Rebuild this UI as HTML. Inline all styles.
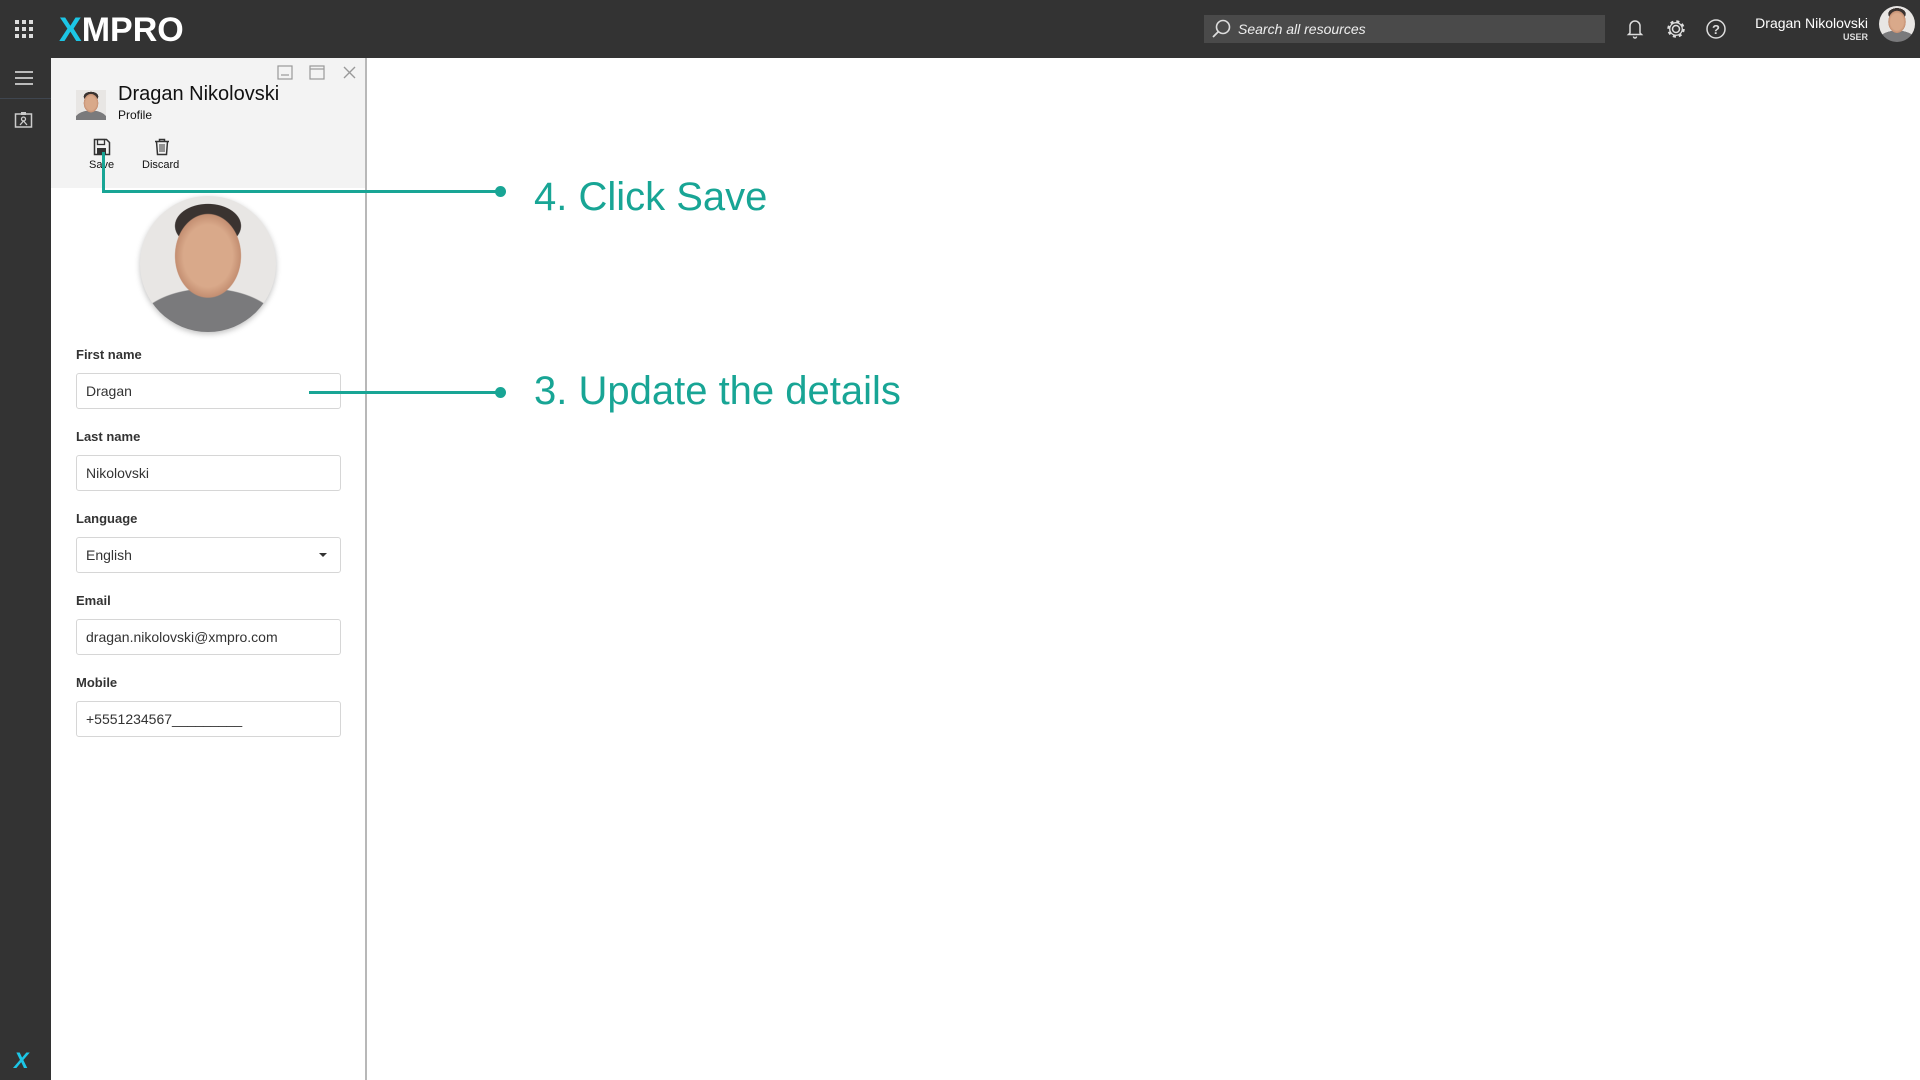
<!DOCTYPE html>
<html><head><meta charset="utf-8"><style>
*{box-sizing:border-box;margin:0;padding:0}
body{width:1920px;height:1080px;position:relative;background:#fff;font-family:"Liberation Sans",Arial,sans-serif;overflow:hidden}
.top{position:absolute;left:0;top:0;width:1920px;height:58px;background:#333}
.side{position:absolute;left:0;top:58px;width:51px;height:1022px;background:#333}
.panel{position:absolute;left:51px;top:58px;width:316px;height:1022px;background:#fff;border-right:2px solid #b8b8b8}
.ph{position:absolute;left:0;top:0;width:314px;height:130px;background:#f3f3f3}
.lbl{position:absolute;left:76px;font-size:13px;font-weight:bold;color:#333}
.inp{position:absolute;left:76px;width:265px;height:36px;border:1px solid #d6d6d6;border-radius:3px;font-size:14px;color:#333;padding:0 0 0 9px;line-height:34px;background:#fff}
.ann{position:absolute;left:534px;font-size:40px;color:#18a595}
.ln{position:absolute;background:#18a595}
.dot{position:absolute;width:11px;height:11px;border-radius:50%;background:#18a595}
.face{border-radius:50%;overflow:hidden;background:radial-gradient(ellipse 30% 38% at 50% 44%,#d9a98a 0 60%,#c48f72 80%,transparent 82%),radial-gradient(ellipse 60% 35% at 50% 100%,#7a7a7c 0 90%,transparent 92%),radial-gradient(ellipse 30% 20% at 50% 22%,#3a3330 0 80%,transparent 82%),#e8e6e4}
</style></head><body>
<div class="top">
 <svg style="position:absolute;left:15px;top:20px" width="18" height="18"><g fill="#ddd"><rect x="0" y="0" width="4" height="4"/><rect x="7" y="0" width="4" height="4"/><rect x="14" y="0" width="4" height="4"/><rect x="0" y="7" width="4" height="4"/><rect x="7" y="7" width="4" height="4"/><rect x="14" y="7" width="4" height="4"/><rect x="0" y="14" width="4" height="4"/><rect x="7" y="14" width="4" height="4"/><rect x="14" y="14" width="4" height="4"/></g></svg>
 <div style="position:absolute;left:59px;top:11px;font-size:34px;font-weight:bold;color:#fff;letter-spacing:0"><span style="color:#1cc6e6">X</span>MPRO</div>
 <div style="position:absolute;left:1204px;top:15px;width:401px;height:28px;background:#4a4a4a"></div>
 <svg style="position:absolute;left:1211px;top:19px" width="20" height="20"><circle cx="12" cy="8" r="6.5" fill="none" stroke="#ddd" stroke-width="1.6"/><line x1="7.5" y1="12.5" x2="2" y2="18" stroke="#ddd" stroke-width="1.8"/></svg>
 <div style="position:absolute;left:1238px;top:21px;font-size:14px;font-style:italic;color:#eee">Search all resources</div>
 <svg style="position:absolute;left:1625px;top:18px" width="20" height="22"><path d="M5 15V8a5 5 0 0 1 10 0v7l1.5 1.5h-13z" fill="none" stroke="#ddd" stroke-width="1.5"/><path d="M8.5 18.5a1.5 1.5 0 0 0 3 0" fill="none" stroke="#ddd" stroke-width="1.5"/></svg>
 <svg style="position:absolute;left:1665px;top:18px" width="22" height="22"><circle cx="11" cy="11" r="3.5" fill="none" stroke="#ddd" stroke-width="1.5"/><circle cx="11" cy="11" r="7.5" fill="none" stroke="#ddd" stroke-width="2.5" stroke-dasharray="3 2.9"/><circle cx="11" cy="11" r="6.3" fill="none" stroke="#ddd" stroke-width="1.3"/></svg>
 <svg style="position:absolute;left:1705px;top:18px" width="22" height="22"><circle cx="11" cy="11" r="9" fill="none" stroke="#ddd" stroke-width="1.5"/><text x="11" y="16" font-size="13" font-family="Liberation Sans" fill="#ddd" text-anchor="middle" font-weight="bold">?</text></svg>
 <div style="position:absolute;right:52px;top:15px;font-size:14px;color:#fff">Dragan Nikolovski</div>
 <div style="position:absolute;right:52px;top:32px;font-size:9px;color:#ddd;font-weight:bold">USER</div>
 <div class="face" style="position:absolute;left:1879px;top:6px;width:36px;height:36px"></div>
</div>
<div class="side">
 <svg style="position:absolute;left:14px;top:12px" width="20" height="16"><g stroke="#bbb" stroke-width="2"><line x1="1" y1="2" x2="19" y2="2"/><line x1="1" y1="8" x2="19" y2="8"/><line x1="1" y1="14" x2="19" y2="14"/></g></svg>
 <div style="position:absolute;left:0;top:40px;width:51px;height:1px;background:#3f4650"></div>
 <svg style="position:absolute;left:14px;top:53px" width="20" height="18"><rect x="1.5" y="3" width="16" height="13" fill="none" stroke="#ccc" stroke-width="1.5"/><circle cx="9.5" cy="8" r="2" fill="none" stroke="#ccc" stroke-width="1.3"/><path d="M6 14l3.5-4 3.5 4" fill="none" stroke="#ccc" stroke-width="1.3"/><rect x="7" y="1" width="5" height="3" fill="#ccc"/></svg>
 <div style="position:absolute;left:14px;top:990px;font-size:22px;font-weight:bold;color:#fff;font-style:italic"><span style="color:#1cc6e6">X</span></div>
</div>
<div class="panel">
 <div class="ph">
  <svg style="position:absolute;left:226px;top:7px" width="90" height="16"><rect x="1" y="1" width="14" height="13" fill="none" stroke="#999" stroke-width="1.2"/><line x1="4" y1="10" x2="12" y2="10" stroke="#999" stroke-width="1.2"/><rect x="33" y="1" width="14" height="13" fill="none" stroke="#999" stroke-width="1.2"/><line x1="33" y1="4" x2="47" y2="4" stroke="#999" stroke-width="1.2"/><path d="M67 2l11 11M78 2L67 13" stroke="#999" stroke-width="1.4"/></svg>
  <div class="face" style="position:absolute;left:25px;top:32px;width:30px;height:30px;border-radius:0"></div>
  <div style="position:absolute;left:67px;top:25px;font-size:20px;color:#111">Dragan Nikolovski</div>
  <div style="position:absolute;left:67px;top:50px;font-size:12px;color:#111">Profile</div>
  <svg style="position:absolute;left:42px;top:80px" width="18" height="18"><path d="M1.5 1.5h12l3 3v12h-15z" fill="none" stroke="#333" stroke-width="1.5"/><rect x="4.5" y="1.5" width="7" height="5" fill="none" stroke="#333" stroke-width="1.3"/><rect x="4" y="10" width="9" height="6.5" fill="#333"/></svg>
  <div style="position:absolute;left:38px;top:101px;font-size:11px;color:#111">Save</div>
  <svg style="position:absolute;left:102px;top:80px" width="18" height="18"><path d="M2 3.5h14M6.5 3.5V1.5h5v2M3.5 3.5l1 13h9l1-13" fill="none" stroke="#333" stroke-width="1.5"/><path d="M7 6v8M9 6v8M11 6v8" stroke="#333" stroke-width="1"/></svg>
  <div style="position:absolute;left:91px;top:101px;font-size:11px;color:#111">Discard</div>
 </div>
 <div class="face" style="position:absolute;left:89px;top:138px;width:136px;height:136px;box-shadow:0 2px 6px rgba(0,0,0,.25)"></div>
</div>
<div class="lbl" style="top:347px">First name</div><div class="inp" style="top:373px">Dragan</div>
<div class="lbl" style="top:429px">Last name</div><div class="inp" style="top:455px">Nikolovski</div>
<div class="lbl" style="top:511px">Language</div><div class="inp" style="top:537px">English<span style="position:absolute;right:13px;top:15px;border:4px solid transparent;border-top:4px solid #333;border-bottom:0"></span></div>
<div class="lbl" style="top:593px">Email</div><div class="inp" style="top:619px">dragan.nikolovski@xmpro.com</div>
<div class="lbl" style="top:675px">Mobile</div><div class="inp" style="top:701px">+5551234567_________</div>
<div class="ln" style="left:102px;top:152px;width:3px;height:41px"></div>
<div class="ln" style="left:102px;top:190px;width:398px;height:3px"></div>
<div class="dot" style="left:495px;top:186px"></div>
<div class="ann" style="top:175px">4. Click Save</div>
<div class="ln" style="left:309px;top:391px;width:191px;height:3px"></div>
<div class="dot" style="left:495px;top:387px"></div>
<div class="ann" style="top:369px">3. Update the details</div>
</body></html>
